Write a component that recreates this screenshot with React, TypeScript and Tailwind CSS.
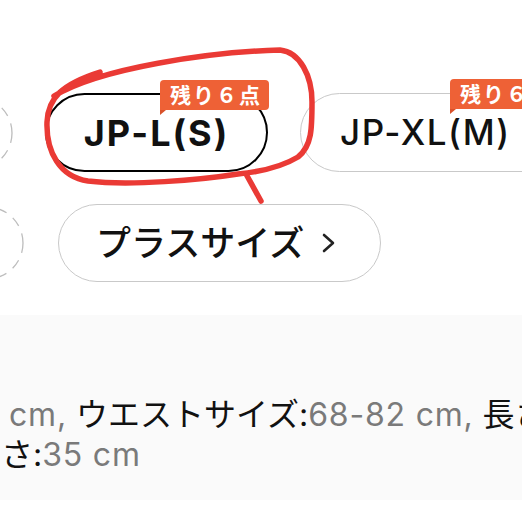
// サイズ選択チップ（画面の一部を拡大したスクリーンショット）
import React from "react";

const FONT = "font-['Inter','Noto_Sans_CJK_JP',sans-serif]";

// 左端で切れている点線の丸
function DashedRing({ className }: { className: string }) {
  return (
    <svg className={className} viewBox="0 0 76 76" fill="none">
      <circle cx="38" cy="38" r="36" stroke="#bdbdbd" strokeWidth="1.3" strokeDasharray="10 8" />
    </svg>
  );
}

// 「残り6点」バッジ
function StockBadge({ className }: { className: string }) {
  return (
    <div className={`absolute ${className}`}>
      <div className="relative flex h-[30px] items-center rounded-t-[4px] rounded-br-[4px] bg-[#ee6136] pl-[10px] pr-[7px] text-[21px] font-bold leading-none tracking-[2px] text-white">
        残り６点
        <span className="absolute left-0 top-full h-0 w-0 border-r-[6px] border-t-[5px] border-r-transparent border-t-[#d9512a]" />
      </div>
    </div>
  );
}

export default function App() {
  return (
    <div className={`relative h-[522px] w-[522px] overflow-hidden bg-white ${FONT}`}>
      {/* チップ一覧 */}
      <div className="h-[315px] pt-[93px]">
        <div className="flex h-[79px] items-center">
          <DashedRing className="ml-[-62px] h-[76px] w-[76px] shrink-0" />
          <div className="relative ml-[31px] flex h-[79px] w-[223px] shrink-0 items-center justify-center rounded-full border-2 border-black">
            <span className="text-[36px] font-bold tracking-[2px] text-[#111]">JP-L(S)</span>
            <StockBadge className="right-[-3px] top-[-15px]" />
          </div>
          <div className="relative ml-[32px] flex h-[79px] w-[280px] shrink-0 items-center rounded-full border border-[#c9c9c9] pl-[39px]">
            <span className="text-[35px] font-medium tracking-[1.5px] text-[#111]">JP-XL(M)</span>
            <StockBadge className="left-[149px] top-[-15px]" />
          </div>
        </div>

        <div className="mt-[32px] flex h-[78px] items-center">
          <DashedRing className="ml-[-51px] h-[76px] w-[76px] shrink-0" />
          <div className="ml-[33px] flex h-[78px] w-[323px] shrink-0 items-center rounded-full border border-[#c9c9c9] pl-[37px]">
            <span className="text-[35px] font-medium leading-none text-[#111]">プラスサイズ</span>
            <svg className="ml-[17px] h-[22px] w-[16px]" viewBox="0 0 16 22" fill="none">
              <path d="M3 3 L12 11 L3 19" stroke="#222" strokeWidth="2.6" strokeLinecap="round" strokeLinejoin="round" />
            </svg>
          </div>
        </div>
      </div>

      {/* サイズ詳細 */}
      <div className="h-[185px] bg-[#fafafa] pt-[80px] text-[32px] leading-[40px]">
        <div className="whitespace-nowrap pl-[9px]">
          <span className="text-[#7a7a7a] tracking-[0.8px]">cm,</span>
          <span className="text-[#111]"> ウエストサイズ:</span>
          <span className="text-[#7a7a7a] tracking-[0.8px]">68-82 cm,</span>
          <span className="text-[#111]"> 長さ</span>
        </div>
        <div className="whitespace-nowrap pl-[1px]">
          <span className="text-[#111]">さ:</span>
          <span className="text-[#7a7a7a] tracking-[0.8px]">35 cm</span>
        </div>
      </div>

      {/* 赤ペンの書き込み */}
      <svg className="pointer-events-none absolute left-0 top-0 h-[522px] w-[522px]" viewBox="0 0 522 522" fill="none">
        <path
          d="M54 96 C100 68 210 52 280 50 C300 52 312 76 312 102 C312 128 312 146 298 157 C280 168 258 172 238 174 C200 180 130 186 88 181 C60 177 46 152 47 122 C48 98 62 84 100 72"
          stroke="#ea3a35"
          strokeWidth="5.5"
          strokeLinecap="round"
          strokeLinejoin="round"
        />
        <path d="M246 174 L261 201" stroke="#ea3a35" strokeWidth="5.5" strokeLinecap="round" />
      </svg>
    </div>
  );
}
